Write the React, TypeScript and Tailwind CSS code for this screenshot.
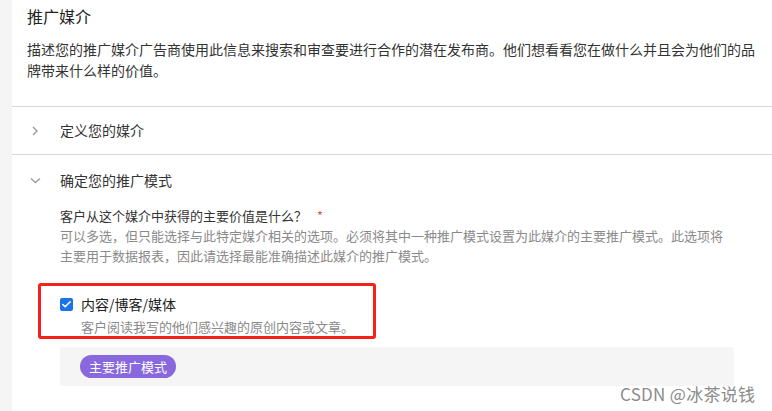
import { Check } from "lucide-react";

const font = "font-['Microsoft_YaHei','Noto_Sans_CJK_SC',sans-serif]";

const ChevronRight = () => (
  <svg width="8" height="10" viewBox="0 0 8 10" className="text-[#9a9a9a]">
    <path d="M2 1l4 4-4 4" fill="none" stroke="currentColor" strokeWidth="1.4" />
  </svg>
);

const ChevronDown = () => (
  <svg width="11" height="7" viewBox="0 0 11 7" className="text-[#9a9a9a]">
    <path d="M1 1.5l4.5 4 4.5-4" fill="none" stroke="currentColor" strokeWidth="1.4" />
  </svg>
);

const App = () => {
  return (
    <div className={`relative flex h-[411px] w-[772px] overflow-hidden bg-white ${font}`}>
      <div className="w-3 shrink-0 bg-[#f5f5f5]" />

      <div className="flex-1">
        {/* header */}
        <div className="border-b border-[#d6d6d6] px-[15px] pt-[4px] pb-[25px]">
          <h1 className="text-[16px] leading-6 text-[#222]">推广媒介</h1>
          <p className="mt-[11px] whitespace-nowrap text-[14px] leading-[21px] text-[#333]">
            描述您的推广媒介广告商使用此信息来搜索和审查要进行合作的潜在发布商。他们想看看您在做什么并且会为他们的品
            <br />
            牌带来什么样的价值。
          </p>
        </div>

        {/* collapsed section */}
        <div className="flex h-[48px] items-center border-b border-[#d6d6d6]">
          <div className="flex w-[48px] justify-center pr-[2px]">
            <ChevronRight />
          </div>
          <span className="text-[14px] text-[#333]">定义您的媒介</span>
        </div>

        {/* expanded section */}
        <div>
          <div className="flex h-[50px] items-center">
            <div className="flex w-[48px] justify-center pr-[2px]">
              <ChevronDown />
            </div>
            <span className="text-[14px] text-[#333]">确定您的推广模式</span>
          </div>

          <div className="pl-[48px] pt-[1px]">
            <p className="text-[13px] leading-5 text-[#333]">
              客户从这个媒介中获得的主要价值是什么？
              <span className="ml-[10px] text-[#e8563f]">*</span>
            </p>
            <p className="whitespace-nowrap text-[13px] leading-5 text-[#8a8a8a]">
              可以多选，但只能选择与此特定媒介相关的选项。必须将其中一种推广模式设置为此媒介的主要推广模式。此选项将
              <br />
              主要用于数据报表，因此请选择最能准确描述此媒介的推广模式。
            </p>
          </div>

          <div className="ml-[26px] mt-[17px] w-[338px] rounded-[3px] border-[3px] border-[#f5211b] pt-[8px] pl-[19px]">
            <div className="flex items-center gap-[8px]">
              <span className="flex h-[13px] w-[13px] items-center justify-center rounded-[2px] bg-[#1a73e8]">
                <Check size={11} strokeWidth={3.5} className="text-white" />
              </span>
              <span className="text-[14px] leading-5 text-[#222]">内容/博客/媒体</span>
            </div>
            <p className="mt-[4px] pl-[21px] text-[13px] leading-[18px] text-[#8a8a8a]">
              客户阅读我写的他们感兴趣的原创内容或文章。
            </p>
          </div>

          <div className="ml-[48px] mt-[8px] flex h-[39px] w-[674px] items-center rounded-[3px] bg-[#f5f5f5] pl-[20px]">
            <span className="flex h-[23px] w-[96px] items-center justify-center rounded-full bg-[#8868dc] text-[13px] text-white">
              主要推广模式
            </span>
          </div>
        </div>
      </div>

      <span className="absolute left-[620px] top-[381px] text-[17px] tracking-[0.3px] text-[#8c8c8c]">
        CSDN @冰茶说钱
      </span>
    </div>
  );
};

export default App;
